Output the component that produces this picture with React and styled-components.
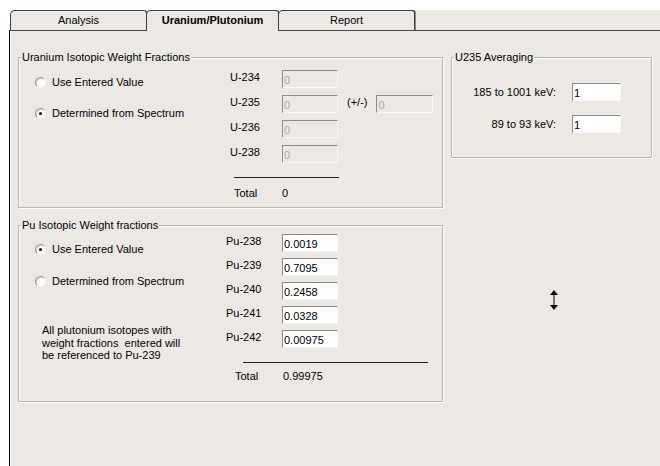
import React from 'react';
import styled, { createGlobalStyle, css } from 'styled-components';

const FACE = '#ece9e5';

const GlobalStyle = createGlobalStyle`
  html, body, #root {
    margin: 0;
    height: 100%;
  }
  body {
    background: #fff;
    font-family: "Liberation Sans", Arial, sans-serif;
    font-size: 11px;
    color: #000;
  }
`;

const Window = styled.div`
  display: flex;
  flex-direction: column;
  min-height: 100%;
  padding-top: 10px;
  box-sizing: border-box;
`;

const TabStrip = styled.div`
  position: relative;
  z-index: 1;
  display: flex;
  align-items: flex-end;
  height: 20px;
  margin-left: 10px;
  background: ${FACE};
`;

const Tab = styled.div`
  position: relative;
  z-index: ${p => (p.$active ? 2 : 1)};
  box-sizing: border-box;
  width: ${p => p.$w}px;
  height: ${p => (p.$active ? 21 : 20)}px;
  margin-bottom: ${p => (p.$active ? -1 : 0)}px;
  margin-left: -1px;
  border: 1px solid #3e3e3e;
  border-bottom: none;
  border-radius: 5px 3px 0 0;
  background: ${FACE};
  text-align: center;
  line-height: 18px;
  font-weight: ${p => (p.$active ? 700 : 400)};

  &:first-child {
    margin-left: 0;
  }
  &:last-child {
    box-shadow: 1px 0 0 #8a8a8a;
  }
`;

const Panel = styled.div`
  position: relative;
  flex: 1;
  display: flex;
  align-items: flex-start;
  gap: 8px;
  margin-left: 9px;
  padding: 19px 8px 0;
  background: ${FACE};
  border-top: 1px solid #4a4a4a;
  border-left: 1px solid #000;
  box-shadow: inset 1px 0 0 #fff;
`;

const LeftStack = styled.div`
  display: flex;
  flex-direction: column;
  gap: 10px;
`;

const GroupBox = styled.fieldset`
  box-sizing: border-box;
  width: ${p => p.$w}px;
  height: ${p => p.$h}px;
  min-width: 0;
  margin: 0;
  padding: 0;
  border: 1px solid #bcb7b1;
  box-shadow: 1px 1px 0 #fff, inset 1px 1px 0 #fff;
`;

const Legend = styled.legend`
  margin-left: 2px;
  padding: 0 1px;
  line-height: 14px;
  background: ${FACE};
`;

const GroupBody = styled.div`
  display: grid;
  grid-template-columns: ${p => p.$left}px 1fr;
`;

const RadioColumn = styled.div`
  display: flex;
  flex-direction: column;
  gap: ${p => p.$gap}px;
  padding: ${p => p.$top}px 0 0 16px;
`;

const RadioRow = styled.label`
  display: flex;
  align-items: center;
  gap: 6px;
  height: 14px;
  line-height: 14px;
`;

const Radio = styled.span`
  position: relative;
  flex: none;
  box-sizing: border-box;
  width: 11px;
  height: 11px;
  border-radius: 50%;
  border: 1px solid;
  border-color: #9a968f #f4f3f1 #f4f3f1 #9a968f;
  background: #fff;
  box-shadow: inset 1px 1px 0 #d6d2cc;

  ${p =>
    p.$checked &&
    css`
      &::after {
        content: '';
        position: absolute;
        left: 3px;
        top: 3px;
        width: 3px;
        height: 3px;
        border-radius: 50%;
        background: #000;
      }
    `}
`;

const Note = styled.div`
  margin-top: 18px;
  padding-left: 7px;
  line-height: 12.5px;
`;

const FieldColumn = styled.div`
  display: flex;
  flex-direction: column;
  gap: ${p => p.$gap}px;
  padding-top: ${p => p.$top}px;
`;

const FieldRow = styled.div`
  display: flex;
  align-items: ${p => (p.$center ? 'center' : 'flex-start')};
`;

const FieldLabel = styled.span`
  flex: none;
  width: ${p => p.$w}px;
  margin-right: ${p => p.$gap || 0}px;
  line-height: 14px;
  text-align: ${p => p.$align || 'left'};
`;

const Box = styled.input`
  box-sizing: border-box;
  flex: none;
  width: ${p => p.$w || 56}px;
  height: 18px;
  margin: 0;
  padding: 1px 0 0 1px;
  font: 11px "Liberation Sans", Arial, sans-serif;
  border: 1px solid;
  border-color: #8f8b85 #f7f6f4 #f7f6f4 #8f8b85;
  outline: none;
  background: ${p => (p.$off ? FACE : '#fff')};
  color: ${p => (p.$off ? '#aaa6a0' : '#000')};
`;

const PlusMinus = styled.span`
  margin: 0 9px;
  line-height: 14px;
`;

const Rule = styled.div`
  width: ${p => p.$w}px;
  height: 1px;
  margin: ${p => p.$top}px 0 0 ${p => p.$left}px;
  background: #222;
`;

const TotalRow = styled.div`
  display: flex;
  margin-top: ${p => p.$top}px;
  padding-left: ${p => p.$left}px;
  line-height: 14px;
`;

const TotalLabel = styled.span`
  width: 48px;
`;

const AveragingBody = styled.div`
  display: flex;
  flex-direction: column;
  gap: 14px;
  padding-top: 19px;
`;

const Cursor = styled.svg`
  position: absolute;
  left: 540px;
  top: 259px;
`;

const uranium = [
  { name: 'U-234' },
  { name: 'U-235', error: true },
  { name: 'U-236' },
  { name: 'U-238' },
];

const plutonium = [
  { name: 'Pu-238', value: '0.0019' },
  { name: 'Pu-239', value: '0.7095' },
  { name: 'Pu-240', value: '0.2458' },
  { name: 'Pu-241', value: '0.0328' },
  { name: 'Pu-242', value: '0.00975' },
];

const App = () => {
  return (
    <>
      <GlobalStyle />
      <Window>
        <TabStrip>
          <Tab $w={137}>Analysis</Tab>
          <Tab $w={133} $active>Uranium/Plutonium</Tab>
          <Tab $w={137}>Report</Tab>
        </TabStrip>

        <Panel>
          <LeftStack>
            <GroupBox $w={425} $h={158}>
              <Legend>Uranium Isotopic Weight Fractions</Legend>
              <GroupBody $left={211}>
                <RadioColumn $top={11} $gap={17}>
                  <RadioRow><Radio />Use Entered Value</RadioRow>
                  <RadioRow><Radio $checked />Determined from Spectrum</RadioRow>
                </RadioColumn>
                <div>
                  <FieldColumn $top={6} $gap={7}>
                    {uranium.map(u => (
                      <FieldRow key={u.name}>
                        <FieldLabel $w={52}>{u.name}</FieldLabel>
                        <Box $off readOnly value="0" />
                        {u.error && (
                          <>
                            <PlusMinus>(+/-)</PlusMinus>
                            <Box $off $w={57} readOnly value="0" />
                          </>
                        )}
                      </FieldRow>
                    ))}
                  </FieldColumn>
                  <Rule $w={105} $top={14} $left={4} />
                  <TotalRow $top={8} $left={4}>
                    <TotalLabel>Total</TotalLabel>
                    <span>0</span>
                  </TotalRow>
                </div>
              </GroupBody>
            </GroupBox>

            <GroupBox $w={425} $h={184}>
              <Legend>Pu Isotopic Weight fractions</Legend>
              <GroupBody $left={207}>
                <RadioColumn $top={10} $gap={18}>
                  <RadioRow><Radio $checked />Use Entered Value</RadioRow>
                  <RadioRow><Radio />Determined from Spectrum</RadioRow>
                  <Note>
                    All plutonium isotopes with<br />
                    weight fractions{'\u00a0'} entered will<br />
                    be referenced to Pu-239
                  </Note>
                </RadioColumn>
                <div>
                  <FieldColumn $top={2} $gap={6}>
                    {plutonium.map(p => (
                      <FieldRow key={p.name}>
                        <FieldLabel $w={56}>{p.name}</FieldLabel>
                        <Box readOnly value={p.value} />
                      </FieldRow>
                    ))}
                  </FieldColumn>
                  <Rule $w={185} $top={14} $left={17} />
                  <TotalRow $top={6} $left={9}>
                    <TotalLabel>Total</TotalLabel>
                    <span>0.99975</span>
                  </TotalRow>
                </div>
              </GroupBody>
            </GroupBox>
          </LeftStack>

          <GroupBox $w={201} $h={108}>
            <Legend>U235 Averaging</Legend>
            <AveragingBody>
              <FieldRow $center>
                <FieldLabel $w={104} $gap={16} $align="right">185 to 1001 keV:</FieldLabel>
                <Box $w={49} readOnly value="1" />
              </FieldRow>
              <FieldRow $center>
                <FieldLabel $w={104} $gap={16} $align="right">89 to 93 keV:</FieldLabel>
                <Box $w={49} readOnly value="1" />
              </FieldRow>
            </AveragingBody>
          </GroupBox>

          {/* vertical resize pointer left on the page */}
          <Cursor width="8" height="20" viewBox="0 0 8 20">
            <polygon points="4,0 8,5 0,5" fill="#000" />
            <rect x="3.5" y="5" width="1" height="10" fill="#000" />
            <polygon points="0,15 8,15 4,20" fill="#000" />
          </Cursor>
        </Panel>
      </Window>
    </>
  );
};

export default App;
